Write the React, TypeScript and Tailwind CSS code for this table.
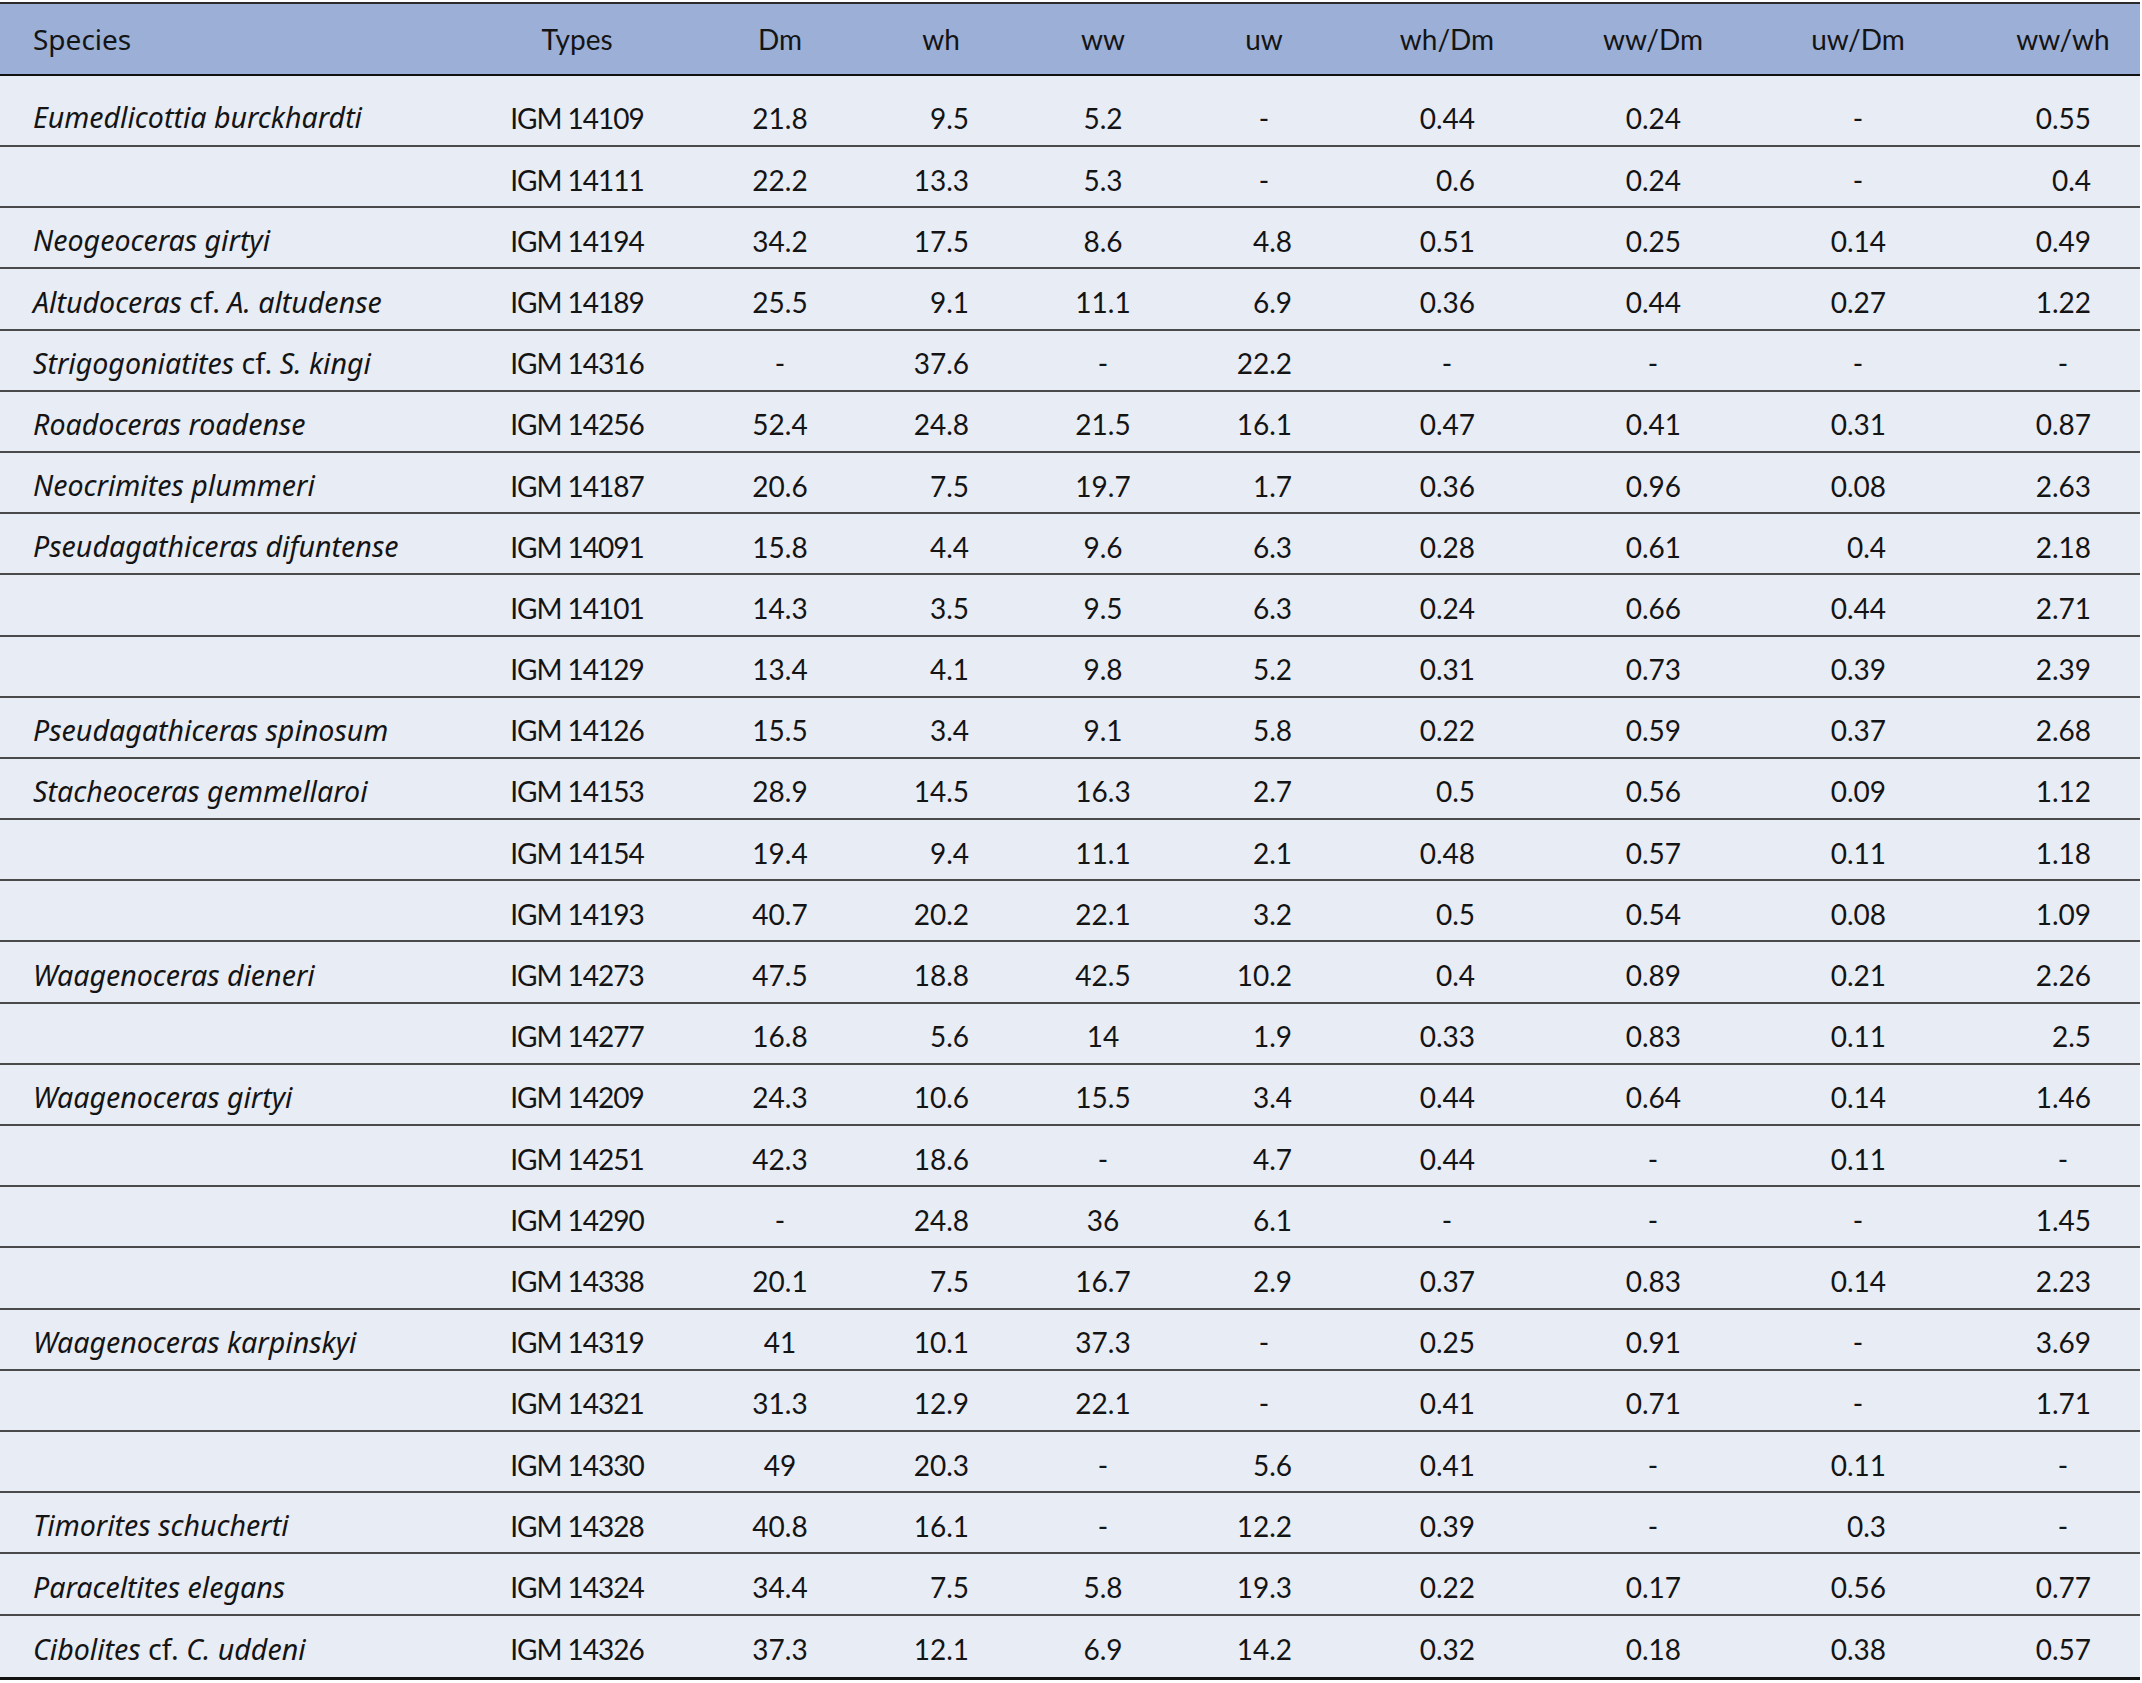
import React from "react";

type Seg = [string, boolean];
type Row = { sp: Seg[]; t: string; v: string[] };

const it = (s: string): Seg[] => [[s, true]];
const cf = (a: string, b: string): Seg[] => [
  [a, true],
  [" cf. ", false],
  [b, true],
];

const rows: Row[] = [
  { sp: it("Eumedlicottia burckhardti"), t: "IGM 14109", v: ["21.8", "9.5", "5.2", "-", "0.44", "0.24", "-", "0.55"] },
  { sp: [], t: "IGM 14111", v: ["22.2", "13.3", "5.3", "-", "0.6", "0.24", "-", "0.4"] },
  { sp: it("Neogeoceras girtyi"), t: "IGM 14194", v: ["34.2", "17.5", "8.6", "4.8", "0.51", "0.25", "0.14", "0.49"] },
  { sp: cf("Altudoceras", "A. altudense"), t: "IGM 14189", v: ["25.5", "9.1", "11.1", "6.9", "0.36", "0.44", "0.27", "1.22"] },
  { sp: cf("Strigogoniatites", "S. kingi"), t: "IGM 14316", v: ["-", "37.6", "-", "22.2", "-", "-", "-", "-"] },
  { sp: it("Roadoceras roadense"), t: "IGM 14256", v: ["52.4", "24.8", "21.5", "16.1", "0.47", "0.41", "0.31", "0.87"] },
  { sp: it("Neocrimites plummeri"), t: "IGM 14187", v: ["20.6", "7.5", "19.7", "1.7", "0.36", "0.96", "0.08", "2.63"] },
  { sp: it("Pseudagathiceras difuntense"), t: "IGM 14091", v: ["15.8", "4.4", "9.6", "6.3", "0.28", "0.61", "0.4", "2.18"] },
  { sp: [], t: "IGM 14101", v: ["14.3", "3.5", "9.5", "6.3", "0.24", "0.66", "0.44", "2.71"] },
  { sp: [], t: "IGM 14129", v: ["13.4", "4.1", "9.8", "5.2", "0.31", "0.73", "0.39", "2.39"] },
  { sp: it("Pseudagathiceras spinosum"), t: "IGM 14126", v: ["15.5", "3.4", "9.1", "5.8", "0.22", "0.59", "0.37", "2.68"] },
  { sp: it("Stacheoceras gemmellaroi"), t: "IGM 14153", v: ["28.9", "14.5", "16.3", "2.7", "0.5", "0.56", "0.09", "1.12"] },
  { sp: [], t: "IGM 14154", v: ["19.4", "9.4", "11.1", "2.1", "0.48", "0.57", "0.11", "1.18"] },
  { sp: [], t: "IGM 14193", v: ["40.7", "20.2", "22.1", "3.2", "0.5", "0.54", "0.08", "1.09"] },
  { sp: it("Waagenoceras dieneri"), t: "IGM 14273", v: ["47.5", "18.8", "42.5", "10.2", "0.4", "0.89", "0.21", "2.26"] },
  { sp: [], t: "IGM 14277", v: ["16.8", "5.6", "14", "1.9", "0.33", "0.83", "0.11", "2.5"] },
  { sp: it("Waagenoceras girtyi"), t: "IGM 14209", v: ["24.3", "10.6", "15.5", "3.4", "0.44", "0.64", "0.14", "1.46"] },
  { sp: [], t: "IGM 14251", v: ["42.3", "18.6", "-", "4.7", "0.44", "-", "0.11", "-"] },
  { sp: [], t: "IGM 14290", v: ["-", "24.8", "36", "6.1", "-", "-", "-", "1.45"] },
  { sp: [], t: "IGM 14338", v: ["20.1", "7.5", "16.7", "2.9", "0.37", "0.83", "0.14", "2.23"] },
  { sp: it("Waagenoceras karpinskyi"), t: "IGM 14319", v: ["41", "10.1", "37.3", "-", "0.25", "0.91", "-", "3.69"] },
  { sp: [], t: "IGM 14321", v: ["31.3", "12.9", "22.1", "-", "0.41", "0.71", "-", "1.71"] },
  { sp: [], t: "IGM 14330", v: ["49", "20.3", "-", "5.6", "0.41", "-", "0.11", "-"] },
  { sp: it("Timorites schucherti"), t: "IGM 14328", v: ["40.8", "16.1", "-", "12.2", "0.39", "-", "0.3", "-"] },
  { sp: it("Paraceltites elegans"), t: "IGM 14324", v: ["34.4", "7.5", "5.8", "19.3", "0.22", "0.17", "0.56", "0.77"] },
  { sp: cf("Cibolites", "C. uddeni"), t: "IGM 14326", v: ["37.3", "12.1", "6.9", "14.2", "0.32", "0.18", "0.38", "0.57"] },
];

// column kinds: "c" = centered, "r" = right-aligned box with centered dash
const kinds = ["c", "r", "c", "r", "r", "r", "r", "r"];
const headers = ["Dm", "wh", "ww", "uw", "wh/Dm", "ww/Dm", "uw/Dm", "ww/wh"];

const grid =
  "grid grid-cols-[480px_194px_212px_110px_214px_108px_258px_154px_256px_154px]";

function Val({ v, kind }: { v: string; kind: string }) {
  if (kind === "c") return <span>{v}</span>;
  return (
    <span className={v === "-" ? "inline-block w-[56px] text-center" : "inline-block w-[56px] text-right"}>
      {v}
    </span>
  );
}

export default function App() {
  return (
    <div className="min-h-[1683px] w-[2142px] bg-white pt-[2px] font-['Lato','Liberation_Sans',sans-serif] text-[28px] leading-none text-[#141414]">
      <div className="w-[2140px] border-t-2 border-[#2a2a2a]">
        <div className={`${grid} h-[72px] items-center bg-[#9bafd7] border-b-[2px] border-[#111]`}>
          <div className="pl-[33px] font-['Noto_Sans',sans-serif] text-[28px]">Species</div>
          <div className="text-center">Types</div>
          {headers.map((h) => (
            <div key={h} className="text-center">
              {h}
            </div>
          ))}
        </div>
        <div className="bg-[#e8ecf4]">
          {rows.map((r, i) => {
            const last = i === rows.length - 1;
            const first = i === 0;
            const h = first ? "h-[71px] pt-[14px]" : last ? "h-[64px] pt-[6px]" : "h-[61.2px] pt-[6px]";
            return (
              <div
                key={i}
                className={`${grid} items-center ${h} ${
                  last ? "border-b-[3px] border-[#111]" : "border-b-2 border-[#4a4a4a]"
                }`}
              >
                <div className="pl-[33px] whitespace-nowrap font-['Noto_Sans',sans-serif] text-[28.6px]">
                  {r.sp.map(([s, ital], k) => (
                    <span key={k} className={ital ? "italic" : ""}>
                      {s}
                    </span>
                  ))}
                </div>
                <div className="text-center tracking-[-1px]">{r.t}</div>
                {r.v.map((v, k) => (
                  <div key={k} className="text-center">
                    <Val v={v} kind={kinds[k]} />
                  </div>
                ))}
              </div>
            );
          })}
        </div>
      </div>
    </div>
  );
}
